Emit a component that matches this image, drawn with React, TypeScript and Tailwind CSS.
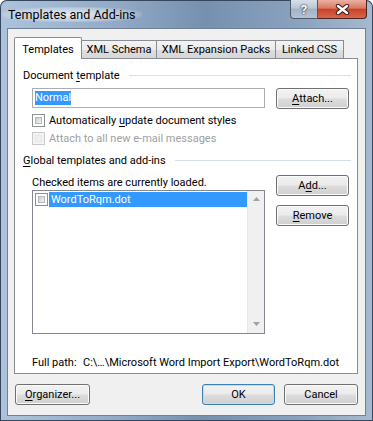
import type { ReactNode } from "react";

const Key = ({ children }: { children: ReactNode }) => (
  <span className="underline underline-offset-[2px] decoration-1">{children}</span>
);

const Button = ({
  children,
  className = "",
  primary = false,
}: {
  children: ReactNode;
  className?: string;
  primary?: boolean;
}) => (
  <div
    className={`flex items-center justify-center rounded-[3px] border bg-[linear-gradient(#f2f2f2,#ebebeb_48%,#dddddd_52%,#cfcfcf)] text-black ${
      primary
        ? "border-[#3c7fb1] shadow-[inset_0_0_0_1px_#aee3f8]"
        : "border-[#707070] shadow-[inset_0_0_0_1px_#fbfbfb]"
    } ${className}`}
  >
    {children}
  </div>
);

const Check = ({ disabled = false }: { disabled?: boolean }) => (
  <div
    className={`w-[13px] h-[13px] shrink-0 border p-[2px] ${
      disabled ? "border-[#cacaca] bg-[#f4f4f4]" : "border-[#8e8f8f] bg-white"
    }`}
  >
    <div
      className={`w-full h-full border ${
        disabled
          ? "border-[#e6e6e6] bg-[#f0f0f0]"
          : "border-[#b5b9be] bg-[linear-gradient(135deg,#c9cdd3,#f4f4f4)]"
      }`}
    />
  </div>
);

const Arrow = ({ down = false }: { down?: boolean }) => (
  <svg width="7" height="5" viewBox="0 0 7 5">
    {down ? (
      <path d="M0 0 H7 L3.5 4 Z" fill="#a2a2a2" />
    ) : (
      <path d="M0 4 H7 L3.5 0 Z" fill="#a2a2a2" />
    )}
  </svg>
);

export default function App() {
  return (
    <div className="w-[373px] h-[421px] flex flex-col rounded-t-[7px] bg-[linear-gradient(90deg,#aec3db_0%,#93abc7_30%,#7690ae_55%,#8aa2be_80%,#a6b9cf_100%)] shadow-[inset_0_0_0_1px_#34475f] font-['Roboto',sans-serif] text-[11px] leading-[15px] text-black whitespace-nowrap">
      {/* title bar */}
      <div className="h-[28px] flex items-start pl-[8px] pr-[6px]">
        <div className="mt-[7px] px-[6px] -ml-[6px] rounded-full bg-[radial-gradient(ellipse_at_center,rgba(255,255,255,0.75),rgba(255,255,255,0.3)_60%,transparent_78%)] text-[12.5px] text-black">
          Templates and Add-ins
        </div>
        <div className="ml-auto flex">
          <div className="w-[28px] h-[19px] flex items-center justify-center rounded-bl-[4px] border border-t-0 border-[#4c5a6b] bg-[linear-gradient(#d6e0ea,#b9c7d6_45%,#a2b3c6_50%,#b4c3d3)] text-[13px] font-bold text-white [text-shadow:0_0_2px_#1d2a38,0_0_1px_#1d2a38]">
            ?
          </div>
          <div className="w-[49px] h-[19px] flex items-center justify-center rounded-br-[4px] border border-l-0 border-t-0 border-[#4a2620] bg-[linear-gradient(#eab0a2,#d97a64_45%,#c7432b_52%,#d8654d)]">
            <svg width="15" height="11" viewBox="0 0 15 11">
              <path d="M3 2 L12 9 M12 2 L3 9" stroke="#3a1a14" strokeWidth="4.4" strokeLinecap="round" />
              <path d="M3 2 L12 9 M12 2 L3 9" stroke="#ffffff" strokeWidth="2.4" strokeLinecap="round" />
            </svg>
          </div>
        </div>
      </div>

      {/* client area */}
      <div className="mx-[7px] h-[388px] border border-[#6f8197] bg-[#f0f0f0] pt-[8px] pl-[6px]">
        {/* tabs */}
        <div className="flex h-[22px]">
          <div className="relative z-10 w-[68px] h-[22px] border border-b-0 border-[#898c95] bg-white rounded-t-[2px] pt-[4px] text-center">
            Templates
          </div>
          <div className="self-end mb-px w-[75px] h-[18px] border border-l-0 border-b-0 border-[#898c95] bg-[linear-gradient(#f3f3f3,#ebebeb_50%,#dedede_51%,#d6d6d6)] pt-[1px] text-center">
            XML Schema
          </div>
          <div className="self-end mb-px w-[119px] h-[18px] border border-l-0 border-b-0 border-[#898c95] bg-[linear-gradient(#f3f3f3,#ebebeb_50%,#dedede_51%,#d6d6d6)] pt-[1px] text-center">
            XML Expansion Packs
          </div>
          <div className="self-end mb-px w-[68px] h-[18px] border border-l-0 border-b-0 border-[#898c95] bg-[linear-gradient(#f3f3f3,#ebebeb_50%,#dedede_51%,#d6d6d6)] pt-[1px] text-center">
            Linked CSS
          </div>
        </div>

        {/* panel */}
        <div className="-mt-px w-[344px] h-[316px] border border-[#898c95] bg-white pl-[8px] pr-[6px] pt-[9px]">
          <div className="flex items-center h-[15px]">
            <span>
              Document <Key>t</Key>emplate
            </span>
            <div className="ml-[9px] flex-1 h-px bg-[#d5dfe5]" />
          </div>

          <div className="pl-[9px]">
            <div className="mt-[5px] flex items-start">
              <div className="w-[233px] h-[20px] border border-[#abadb3] bg-white pl-[2px] flex items-center">
                <span className="bg-[#3399ff] text-white leading-[14px]">Normal</span>
              </div>
              <Button className="ml-[11px] w-[73px] h-[21px]">
                <span>
                  <Key>A</Key>ttach...
                </span>
              </Button>
            </div>

            <div className="mt-[2px] h-[18px] flex items-center">
              <Check />
              <span className="ml-[4px]">
                Automatically <Key>u</Key>pdate document styles
              </span>
            </div>
            <div className="h-[18px] flex items-center">
              <Check disabled />
              <span className="ml-[4px] text-[#a0a0a0]">Attach to all new e-mail messages</span>
            </div>
          </div>

          <div className="mt-[6px] flex items-center h-[15px]">
            <span>
              <Key>G</Key>lobal templates and add-ins
            </span>
            <div className="ml-[9px] flex-1 h-px bg-[#d5dfe5]" />
          </div>

          <div className="pl-[9px] mt-[7px] flex items-start">
            <div className="w-[233px]">
              <div className="h-[15px]">Checked items are currently loaded.</div>
              <div className="h-[144px] border border-[#828790] bg-white flex">
                <div className="flex-1 pt-px pl-[2px]">
                  <div className="h-[15px] flex items-center">
                    <Check />
                    <div className="ml-px flex-1 h-[15px] bg-[#3399ff] text-white pl-[2px]">
                      WordToRqm.dot
                    </div>
                  </div>
                </div>
                <div className="w-[17px] h-full bg-[#f0f0f0] border-l border-[#e8e8e8] flex flex-col items-center justify-between py-[6px]">
                  <Arrow />
                  <Arrow down />
                </div>
              </div>
            </div>
            <div className="ml-[11px] flex flex-col">
              <Button className="w-[73px] h-[21px]">
                <span>
                  A<Key>d</Key>d...
                </span>
              </Button>
              <Button className="mt-[9px] w-[73px] h-[21px]">
                <span>
                  <Key>R</Key>emove
                </span>
              </Button>
            </div>
          </div>

          <div className="pl-[9px] mt-[21px] flex h-[15px]">
            <span className="w-[51px] shrink-0">Full path:</span>
            <span>C:\…\Microsoft Word Import Export\WordToRqm.dot</span>
          </div>
        </div>

        {/* bottom buttons */}
        <div className="mt-[10px] pl-px flex">
          <Button className="w-[75px] h-[21px]">
            <span>
              <Key>O</Key>rganizer...
            </span>
          </Button>
          <Button primary className="ml-[112px] w-[73px] h-[21px]">
            OK
          </Button>
          <Button className="ml-[9px] w-[74px] h-[21px]">Cancel</Button>
        </div>
      </div>
    </div>
  );
}
